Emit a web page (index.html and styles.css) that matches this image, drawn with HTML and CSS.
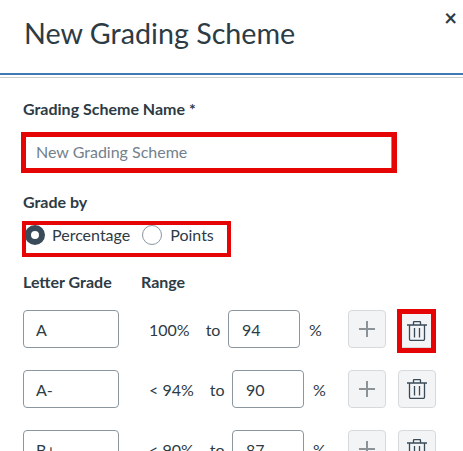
FILE: index.html
```html
<!DOCTYPE html>
<html lang="en">
<head>
<meta charset="UTF-8">
<title>New Grading Scheme</title>
<link rel="stylesheet" href="styles.css">
</head>
<body>
    <div class="modal-header">
        <h1>New Grading Scheme</h1>
        <span class="close">&times;</span>
    </div>

    <div class="modal-body">
        <label class="field-label">Grading Scheme Name *</label>
        <div class="name-mark">
            <input class="name-input" type="text" placeholder="New Grading Scheme">
        </div>

        <label class="field-label grade-by">Grade by</label>
        <div class="radio-mark">
            <span class="radio radio-on"></span>
            <span class="radio-text">Percentage</span>
            <span class="radio"></span>
            <span class="radio-text">Points</span>
        </div>

        <div class="col-heads">
            <span class="col-letter">Letter Grade</span>
            <span>Range</span>
        </div>

        <div class="grade-row">
            <input class="letter-input" type="text" value="A">
            <span class="range-top">100%</span>
            <span class="range-to">to</span>
            <input class="value-input" type="text" value="94">
            <span class="percent">%</span>
            <div class="row-btns">
                <button class="square-btn plus-btn">
                    <svg width="16" height="16" viewBox="0 0 16 16"><path d="M8 0v16M0 8h16"/></svg>
                </button>
                <span class="trash-mark">
                    <button class="square-btn">
                        <svg width="20" height="20" viewBox="0 0 20 20"><path d="M0 4h20M2.500 4v14q0 1.500 1.500 1.500h12q1.500 0 1.500-1.500V4M6.500 4V1.500q0-1 1-1h5q1 0 1 1V4M7.500 7v9.500M12.500 7v9.500"/></svg>
                    </button>
                </span>
            </div>
        </div>

        <div class="grade-row">
            <input class="letter-input" type="text" value="A-">
            <span class="range-top">&lt; 94%</span>
            <span class="range-to">to</span>
            <input class="value-input" type="text" value="90">
            <span class="percent">%</span>
            <div class="row-btns">
                <button class="square-btn plus-btn">
                    <svg width="16" height="16" viewBox="0 0 16 16"><path d="M8 0v16M0 8h16"/></svg>
                </button>
                <button class="square-btn">
                    <svg width="20" height="20" viewBox="0 0 20 20"><path d="M0 4h20M2.500 4v14q0 1.500 1.500 1.500h12q1.500 0 1.500-1.500V4M6.500 4V1.500q0-1 1-1h5q1 0 1 1V4M7.500 7v9.500M12.500 7v9.500"/></svg>
                </button>
            </div>
        </div>

        <div class="grade-row">
            <input class="letter-input" type="text" value="B+">
            <span class="range-top">&lt; 90%</span>
            <span class="range-to">to</span>
            <input class="value-input" type="text" value="87">
            <span class="percent">%</span>
            <div class="row-btns">
                <button class="square-btn plus-btn">
                    <svg width="16" height="16" viewBox="0 0 16 16"><path d="M8 0v16M0 8h16"/></svg>
                </button>
                <button class="square-btn">
                    <svg width="20" height="20" viewBox="0 0 20 20"><path d="M0 4h20M2.500 4v14q0 1.500 1.500 1.500h12q1.500 0 1.500-1.500V4M6.500 4V1.500q0-1 1-1h5q1 0 1 1V4M7.500 7v9.500M12.500 7v9.500"/></svg>
                </button>
            </div>
        </div>
    </div>
</body>
</html>
```

FILE: styles.css
```css
html, body {
    height: 451px;
    overflow: hidden;
}

body {
    font-family: Lato, "Liberation Sans", sans-serif;
    background-color: #ffffff;
    color: #2d3b45;
    margin: 0;
    padding: 0;
}

.modal-header {
    display: flex;
    justify-content: space-between;
    height: 73px;
    padding: 0 6px 0 24px;
    border-bottom: 2px solid #3f78b5;
    box-shadow: 0 2px 0 #ffffff, 0 3px 0 #c7cdd1;
}

.modal-header h1 {
    margin: 0;
    padding-top: 16px;
    font-size: 28.7px;
    line-height: 34px;
    font-weight: 400;
}

.close {
    font-size: 22px;
    line-height: 20px;
    font-weight: 700;
    padding-top: 8px;
}

.modal-body {
    padding: 24px 27px 0 23px;
}

.field-label {
    display: block;
    font-size: 16px;
    line-height: 20px;
    font-weight: 700;
}

.name-mark {
    width: 376px;
    height: 41px;
    margin: 13px 0 0 -2px;
    box-sizing: border-box;
    border: 5px solid #e60505;
}

.name-input {
    display: block;
    width: 100%;
    height: 100%;
    box-sizing: border-box;
    border: none;
    border-right: 1px solid #8b969e;
    padding: 0 10px 3px;
    font-family: inherit;
    font-size: 16px;
    outline: none;
}

.name-input::placeholder {
    color: #73818c;
    opacity: 1;
}

.grade-by {
    margin-top: 19px;
}

.radio-mark {
    display: flex;
    align-items: flex-start;
    width: 209px;
    height: 36px;
    margin: 9px 0 0 -1px;
    box-sizing: border-box;
    border: 4px solid #e60505;
    overflow: hidden;
    font-size: 16px;
}

.radio {
    flex: none;
    width: 20px;
    height: 20px;
    box-sizing: border-box;
    border: 1px solid #8b969e;
    border-radius: 50%;
    background-color: #ffffff;
}

.radio-on {
    margin: 0 -1px 0 -1px;
    border: 6px solid #394b58;
}

.radio-text {
    margin-left: 8px;
    margin-right: 12px;
    line-height: 20px;
}

.col-heads {
    display: flex;
    margin-top: 15px;
    font-size: 16px;
    line-height: 20px;
    font-weight: 700;
}

.col-letter {
    width: 118px;
}

.grade-row {
    display: flex;
    align-items: center;
    height: 38px;
    margin-top: 22px;
    font-size: 16px;
}

.col-heads + .grade-row {
    margin-top: 18px;
}

.grade-row input {
    height: 38px;
    box-sizing: border-box;
    border: 1px solid #8b969e;
    border-radius: 4px;
    padding: 0 12px;
    font-family: inherit;
    font-size: 16px;
    color: #2d3b45;
    outline: none;
}

.letter-input {
    width: 96px;
}

.range-top {
    margin-left: 30px;
}

.range-to {
    margin-left: 16px;
    margin-right: 7.5px;
}

.grade-row .value-input {
    width: 72px;
    padding: 0 13px;
}

.percent {
    margin-left: 9px;
}

.row-btns {
    display: flex;
    gap: 12px;
    margin-left: auto;
}

.square-btn {
    display: flex;
    align-items: center;
    justify-content: center;
    width: 38px;
    height: 38px;
    padding: 0;
    box-sizing: border-box;
    border: 1px solid #d7dadd;
    border-radius: 4px;
    background-color: #f3f4f5;
}

.square-btn svg {
    fill: none;
    stroke: #394b58;
    stroke-width: 1.3;
}

.plus-btn svg {
    stroke: #8b9298;
    stroke-width: 2;
}

.trash-mark {
    display: block;
    flex: none;
    width: 39px;
    height: 44px;
    margin: -1px 0 -5px -1px;
    box-sizing: border-box;
    border: 5px solid #e60505;
}

.trash-mark .square-btn {
    width: 29px;
    height: 34px;
    border: none;
    border-bottom: 1px solid #d7dadd;
    border-radius: 0;
}
```
